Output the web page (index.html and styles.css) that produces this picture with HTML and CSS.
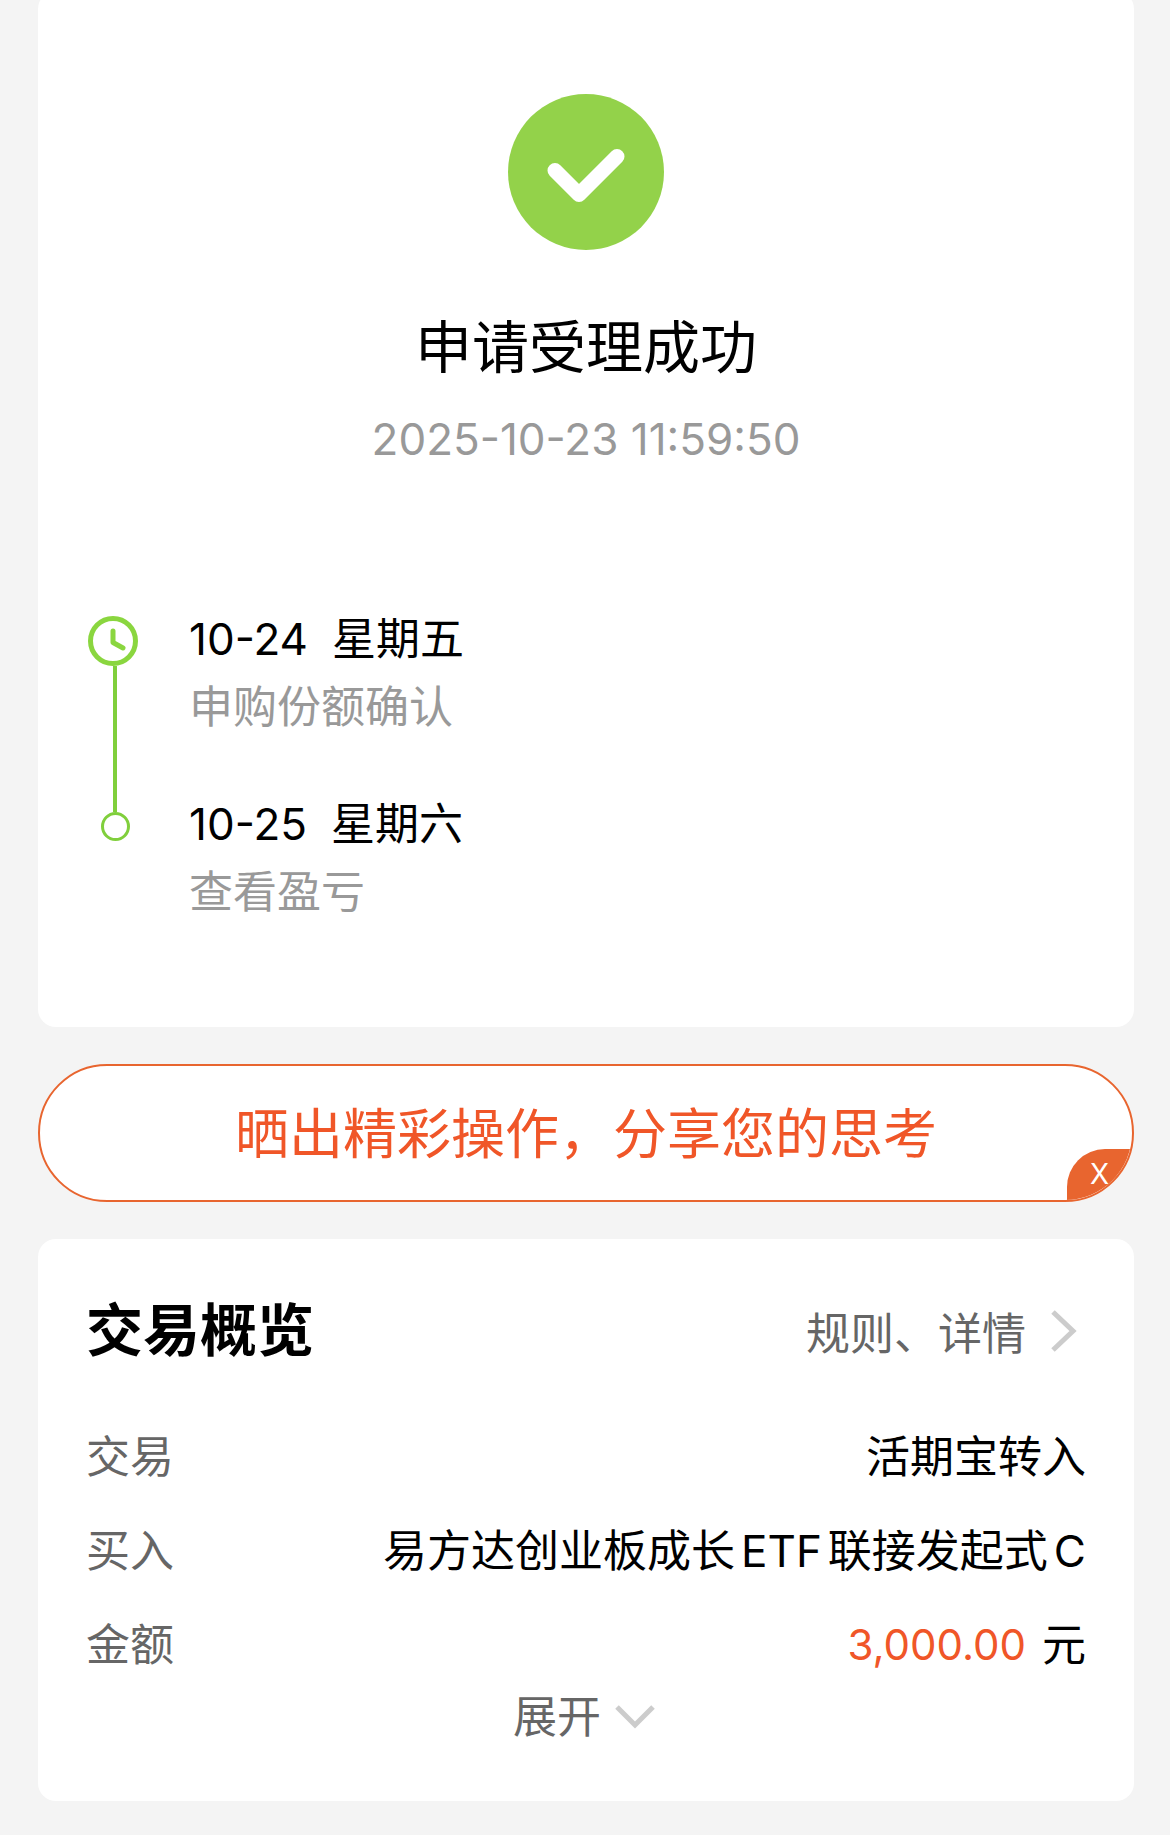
FILE: index.html
```html
<!DOCTYPE html>
<html lang="zh-CN">
<head>
    <meta charset="UTF-8">
    <meta name="viewport" content="width=device-width, initial-scale=1">
    <title>申请受理成功</title>
    <link rel="stylesheet" href="styles.css">
</head>
<body>
<main class="page">
    <!-- Result -->
    <section class="card result">
        <svg class="result-icon" viewBox="0 0 156 156" aria-hidden="true">
            <circle cx="78" cy="78" r="78" fill="#93d24a"/>
            <path d="M47 76.500L71 100.500L109 62.500" fill="none" stroke="#fff" stroke-width="15" stroke-linecap="round" stroke-linejoin="round"/>
        </svg>
        <h1 class="result-title">申请受理成功</h1>
        <time class="result-time">2025-10-23 11:59:50</time>

        <ol class="timeline">
            <li class="step">
                <div class="marker marker-clock">
                    <svg class="clock" viewBox="0 0 54 50" aria-hidden="true">
                        <g fill="none" stroke="#8ad63f">
                            <circle cx="25" cy="25" r="22.500" stroke-width="5"/>
                            <path d="M25 15v11.500L35 32" stroke-width="5" stroke-linecap="round" stroke-linejoin="round"/>
                        </g>
                    </svg>
                    <span class="line"></span>
                </div>
                <div class="step-text">
                    <p class="step-date"><span>10-24</span><span>星期五</span></p>
                    <p class="step-note">申购份额确认</p>
                </div>
            </li>
            <li class="step">
                <div class="marker">
                    <span class="line line-short"></span>
                    <span class="dot"></span>
                </div>
                <div class="step-text">
                    <p class="step-date"><span>10-25</span><span>星期六</span></p>
                    <p class="step-note">查看盈亏</p>
                </div>
            </li>
        </ol>
    </section>

    <!-- Share banner -->
    <div class="share">
        <button class="share-button" type="button">晒出精彩操作，分享您的思考</button>
        <button class="share-close" type="button" aria-label="关闭">X</button>
    </div>

    <!-- Trade overview -->
    <section class="card overview">
        <header class="overview-head">
            <h2 class="overview-title">交易概览</h2>
            <a class="overview-link" href="#">规则、详情
                <svg class="arrow-right" viewBox="0 0 28 44" aria-hidden="true">
                    <path d="M3 3L23 22L3 41" fill="none" stroke="#ccc" stroke-width="5"/>
                </svg>
            </a>
        </header>
        <dl class="rows">
            <div class="row">
                <dt>交易</dt>
                <dd>活期宝转入</dd>
            </div>
            <div class="row">
                <dt>买入</dt>
                <dd class="fund"><span>易方达创业板成长</span><span>ETF</span><span>联接发起式</span><span>C</span></dd>
            </div>
            <div class="row">
                <dt>金额</dt>
                <dd class="amount"><span class="money">3,000.00</span><span>元</span></dd>
            </div>
        </dl>
        <button class="expand" type="button">展开
            <svg class="arrow-down" viewBox="0 0 40 24" aria-hidden="true">
                <path d="M2 2L20 20L38 2" fill="none" stroke="#ccc" stroke-width="5"/>
            </svg>
        </button>
    </section>
</main>
</body>
</html>
```

FILE: styles.css
```css
* {
    box-sizing: border-box;
    margin: 0;
    padding: 0;
}

body {
    font-family: Inter, "Noto Sans CJK SC", sans-serif;
    font-size: 44px;
    color: #000;
    background-color: #f4f4f4;
}

button {
    font: inherit;
    border: none;
    background: none;
    cursor: pointer;
}

/* The first card starts a little above the window */
.page {
    display: flex;
    flex-direction: column;
    gap: 37px;
    margin-top: -9px;
    padding: 0 36px 34px 38px;
}

.card {
    padding: 0 48px;
    background-color: #fff;
    border-radius: 18px;
}

/* Result */
.result {
    display: flex;
    flex-direction: column;
    align-items: center;
    padding-top: 103px;
    padding-bottom: 101px;
}

.result-icon {
    width: 156px;
    height: 156px;
}

.result-title {
    margin-top: 58px;
    font-size: 57px;
    font-weight: 400;
    line-height: 80px;
}

.result-time {
    margin-top: 21px;
    line-height: 60px;
    color: #999;
}

/* Timeline */
.timeline {
    width: 100%;
    margin-top: 136px;
    list-style: none;
}

.step {
    display: flex;
    gap: 45px;
}

.marker {
    display: flex;
    flex-direction: column;
    align-items: center;
    width: 58px;
}

.marker-clock {
    padding-top: 11px;
}

.clock {
    width: 54px;
    height: 50px;
}

.line {
    flex: 1;
    width: 4px;
    background-color: #80cf3c;
}

.line-short {
    flex: none;
    height: 22px;
}

.dot {
    width: 29px;
    height: 29px;
    border: 3px solid #80cf3c;
    border-radius: 50%;
}

.step-text {
    line-height: 68px;
}

.step:not(:last-child) .step-text {
    padding-bottom: 49px;
}

.step-date {
    display: flex;
    gap: 24px;
}

.step-note {
    color: #999;
}

/* Share banner */
.share {
    position: relative;
    overflow: hidden;
    background-color: #fff;
    border: 2px solid #e8652f;
    border-radius: 69px;
}

.share-button {
    display: block;
    width: 100%;
    padding-top: 4px;
    font-size: 54px;
    line-height: 130px;
    color: #f05628;
}

.share-close {
    position: absolute;
    right: 0;
    bottom: 0;
    width: 65px;
    height: 51px;
    font-size: 28px;
    line-height: 51px;
    color: #fff;
    background-color: #e8652f;
    border-top-left-radius: 38px;
}

/* Trade overview */
.overview {
    padding-top: 46px;
    padding-bottom: 59px;
}

.overview-head {
    display: flex;
    justify-content: space-between;
    align-items: center;
    height: 88px;
    margin-bottom: 37px;
}

.overview-title {
    padding-bottom: 6px;
    font-size: 57px;
    font-weight: 700;
}

.overview-link {
    display: flex;
    align-items: center;
    gap: 24px;
    padding-top: 4px;
    padding-right: 8px;
    color: #666;
    text-decoration: none;
}

.arrow-right {
    width: 28px;
    height: 44px;
}

.row {
    display: flex;
    justify-content: space-between;
    line-height: 94px;
}

.row dt {
    color: #666;
}

.fund {
    display: flex;
    gap: 6px;
}

.amount {
    display: flex;
    gap: 16px;
}

.money {
    font-size: 42px;
    color: #f05628;
}

.expand {
    display: flex;
    justify-content: center;
    align-items: center;
    gap: 14px;
    width: 100%;
    padding-right: 4px;
    line-height: 50px;
    color: #666;
}

.arrow-down {
    width: 40px;
    height: 24px;
}
```
